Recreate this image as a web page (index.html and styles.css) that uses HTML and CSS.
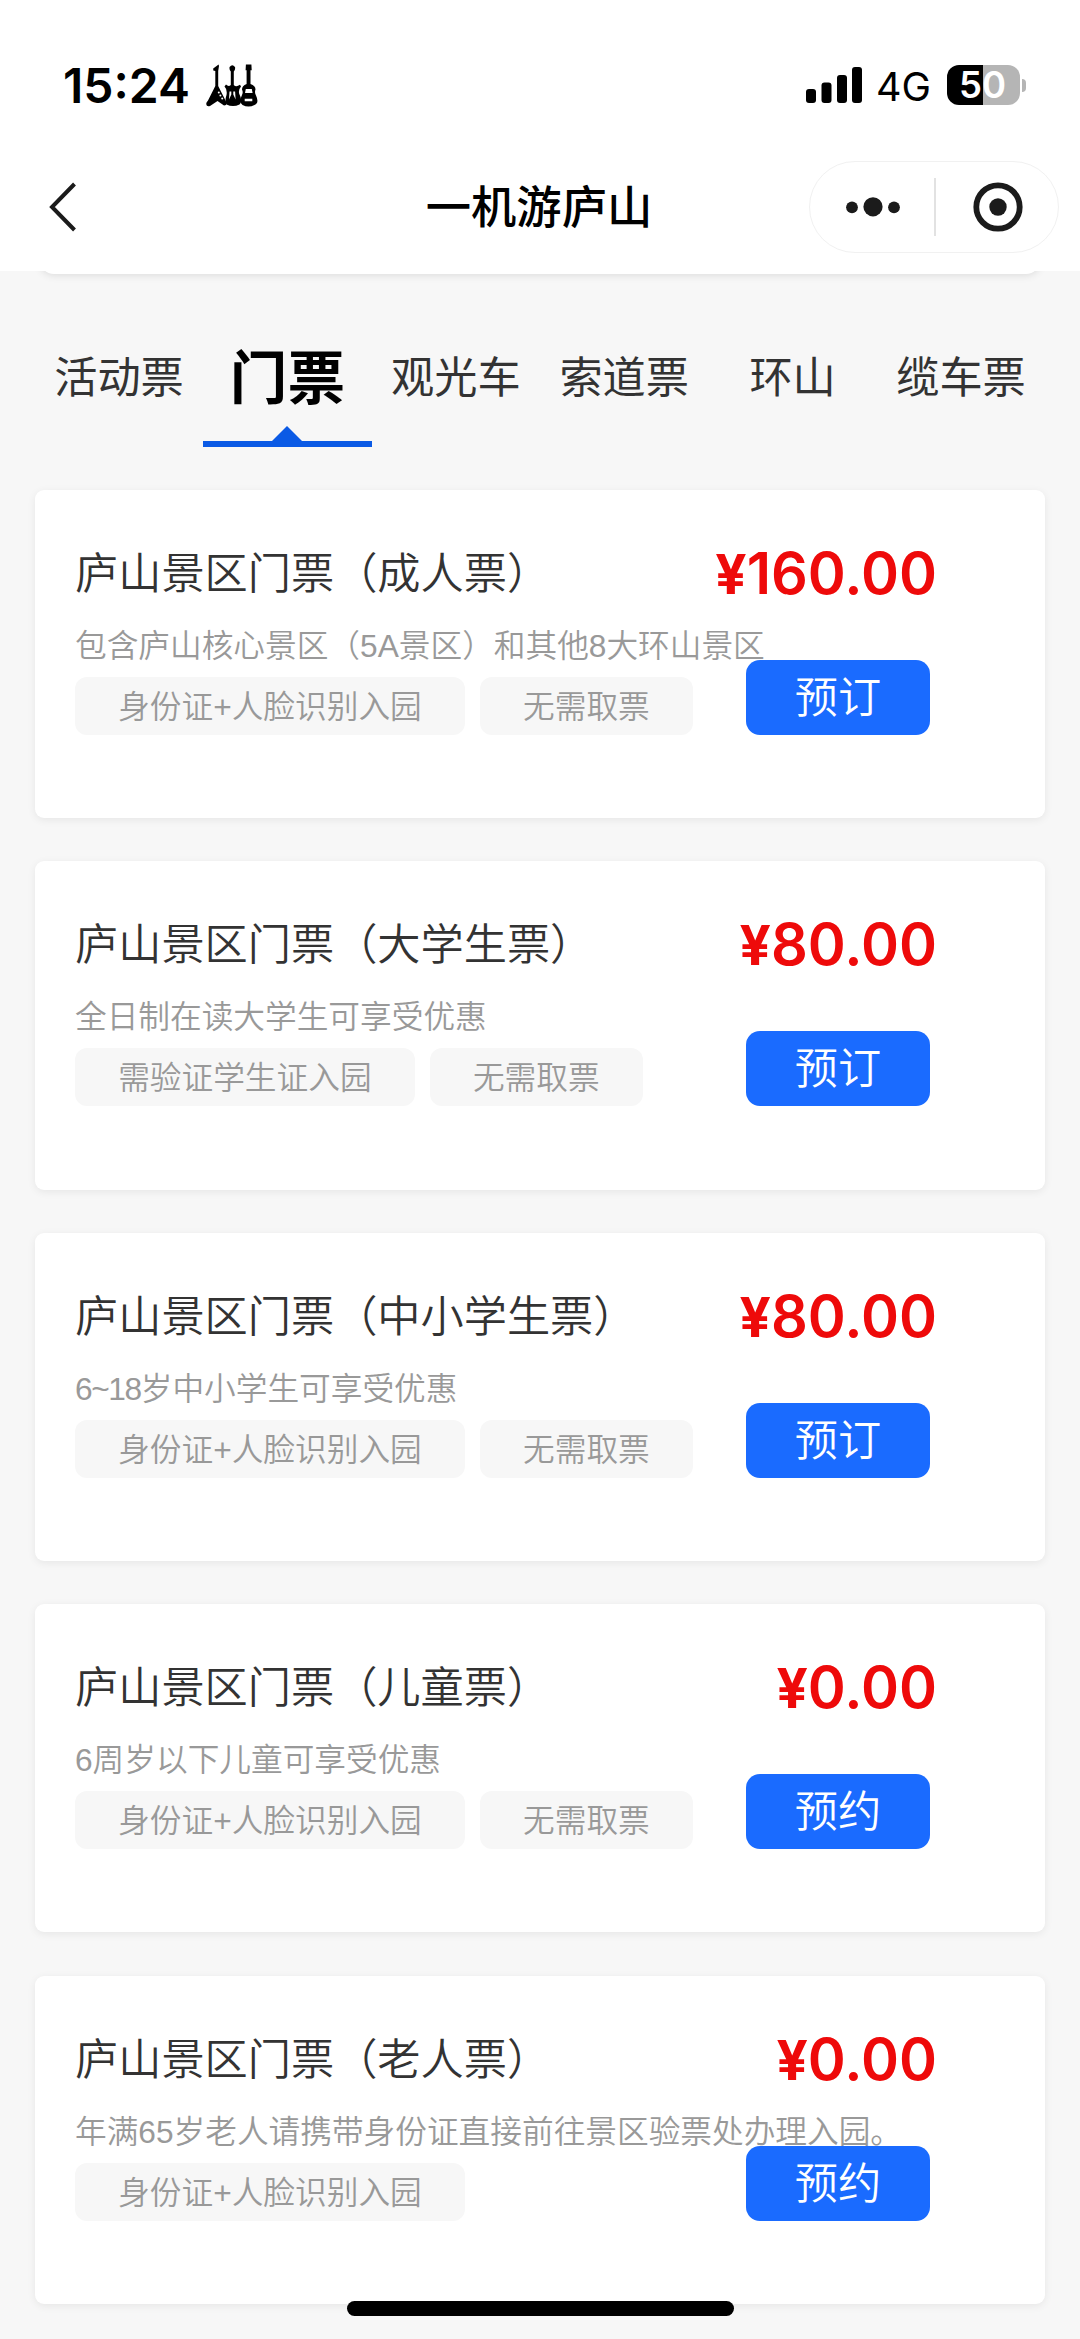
FILE: index.html
```html
<!DOCTYPE html>
<html lang="zh-CN">
<head>
<meta charset="utf-8">
<title>一机游庐山</title>
<link rel="stylesheet" href="styles.css">
</head>
<body>
<header class="header">
  <div class="status">
    <span class="time">15:24</span>
    <svg class="guitars" width="52" height="43" viewBox="0 0 52 43">
      <path d="M9.300 22V7L7.300 6.500 7.200 4.600 12.600 0.600 13 2 12.200 7V22L20.500 38.500Q21 41.500 18 41.500L11.500 37 4 42Q0.500 43 0.200 40Q0 38.500 2 36.500Z"/>
      <path d="M24.800 21V7.500Q23 5.500 23.600 3Q26.300-0.500 29 3Q29.600 5.500 27.800 7.500V21Q30 23.500 34 20.800L35 22.500Q32 26 33.300 30Q37 37 33.500 40.500Q27 43.500 20.500 40.500Q18.500 37 20.500 31Q21.500 25.500 18.500 22.500L20 20.500Q22.500 23 24.800 21Z"/>
      <path d="M40.600 20V6.200H39.600L39.900.5H45.400L45.700 6.200H44.500V20Q49.500 21.500 49.500 25.500Q48.300 28.500 50 31.500Q53.500 39 48.500 41Q42.500 44 36.500 41Q32.500 38 35.800 31.500Q37.500 28.500 36 25.500Q36 21.500 40.600 20Z"/>
      <g fill="#fff"><circle cx="12.800" cy="28.600" r="1"/><circle cx="14.400" cy="31.600" r="1"/><circle cx="16.200" cy="34.600" r="1"/><path d="M23.500 27.500h1.800v3l-2.300 5zM29.100 27.500h-1.800v3l2.300 5zM39.800 25h6l.8 4h-7.600zM38.700 34.700h7.600v2.500h-7.600z"/></g>
    </svg>
    <svg class="signal" width="56" height="36" viewBox="0 0 56 36">
      <rect x="0" y="22" width="10" height="14" rx="3"/><rect x="15.500" y="15.500" width="10" height="20.500" rx="3"/><rect x="31" y="8" width="10" height="28" rx="3"/><rect x="46" y="0" width="10" height="36" rx="3"/>
    </svg>
    <span class="network">4G</span>
    <span class="battery"><b>50</b></span>
    <span class="battery-cap"></span>
  </div>
  <div class="navbar">
    <svg class="back" width="28" height="52" viewBox="0 0 28 52"><path d="M25.500 3 3 26 25.500 49" fill="none" stroke="#1b1b1b" stroke-width="4"/></svg>
    <h1 class="title">一机游庐山</h1>
    <div class="capsule">
      <svg width="54" height="20" viewBox="0 0 54 20"><circle cx="6" cy="10.300" r="5.900"/><circle cx="27" cy="9.800" r="9.600"/><circle cx="48" cy="10.300" r="5.900"/></svg>
      <i class="divider"></i>
      <svg width="50" height="50" viewBox="0 0 50 50"><circle cx="25" cy="25" r="21.700" fill="none" stroke="#1b1b1b" stroke-width="5.800"/><circle cx="25" cy="25" r="8.700"/></svg>
    </div>
  </div>
</header>
<div class="banner-edge"></div>
<nav class="tabs">
  <span class="tab">活动票</span>
  <span class="tab active">门票</span>
  <span class="tab">观光车</span>
  <span class="tab">索道票</span>
  <span class="tab">环山</span>
  <span class="tab">缆车票</span>
</nav>
<main class="list">
  <section class="card">
    <div class="info">
      <h2 class="name">庐山景区门票（成人票）</h2>
      <p class="desc">包含庐山核心景区（5A景区）和其他8大环山景区</p>
      <div class="tags"><span class="tag">身份证+人脸识别入园</span><span class="tag">无需取票</span></div>
    </div>
    <div class="buy"><span class="price"><span class="yen">¥</span>160.00</span><span class="button">预订</span></div>
  </section>
  <section class="card">
    <div class="info">
      <h2 class="name">庐山景区门票（大学生票）</h2>
      <p class="desc">全日制在读大学生可享受优惠</p>
      <div class="tags"><span class="tag">需验证学生证入园</span><span class="tag">无需取票</span></div>
    </div>
    <div class="buy"><span class="price"><span class="yen">¥</span>80.00</span><span class="button">预订</span></div>
  </section>
  <section class="card">
    <div class="info">
      <h2 class="name">庐山景区门票（中小学生票）</h2>
      <p class="desc"><span class="range">6~18</span>岁中小学生可享受优惠</p>
      <div class="tags"><span class="tag">身份证+人脸识别入园</span><span class="tag">无需取票</span></div>
    </div>
    <div class="buy"><span class="price"><span class="yen">¥</span>80.00</span><span class="button">预订</span></div>
  </section>
  <section class="card">
    <div class="info">
      <h2 class="name">庐山景区门票（儿童票）</h2>
      <p class="desc">6周岁以下儿童可享受优惠</p>
      <div class="tags"><span class="tag">身份证+人脸识别入园</span><span class="tag">无需取票</span></div>
    </div>
    <div class="buy"><span class="price"><span class="yen">¥</span>0.00</span><span class="button">预约</span></div>
  </section>
  <section class="card">
    <div class="info">
      <h2 class="name">庐山景区门票（老人票）</h2>
      <p class="desc">年满65岁老人请携带身份证直接前往景区验票处办理入园。</p>
      <div class="tags"><span class="tag">身份证+人脸识别入园</span></div>
    </div>
    <div class="buy"><span class="price"><span class="yen">¥</span>0.00</span><span class="button">预约</span></div>
  </section>
</main>
<div class="home-bar"></div>
</body>
</html>
```
FILE: styles.css
```css
* { box-sizing: border-box; margin: 0; padding: 0; }
body {
  width: 1080px;
  height: 2339px;
  overflow: hidden;
  background: #f7f7f7;
  color: #333;
  font-family: Inter, "Noto Sans CJK SC", sans-serif;
}
svg { display: block; flex: none; fill: #1b1b1b; }

.header { height: 271px; background: #fff; position: relative; z-index: 1; }
.status { display: flex; align-items: flex-start; height: 161px; padding: 64px 54px 0 63px; color: #000; }
.status svg { fill: #000; }
.time { width: 143px; font-size: 48px; line-height: 43px; font-weight: 600; white-space: nowrap; }
.signal { margin: 3px 14px 0 auto; }
.network { width: 71px; font-size: 39.500px; line-height: 47px; font-weight: 400; white-space: nowrap; }
.battery {
  width: 73px;
  height: 40px;
  margin-top: 1px;
  padding-right: 2px;
  border-radius: 12px;
  background: linear-gradient(90deg, #000 50%, #b5b5b5 50%);
  color: #fff;
  text-align: center;
  line-height: 40px;
  font-size: 36.500px;
}
.battery b { font-weight: 600; }
.battery-cap { width: 4px; height: 13px; margin: 15px 0 0 2px; border-radius: 0 4px 4px 0; background: #b5b5b5; }

.navbar { display: grid; grid-template-columns: 250px 1fr 250px; align-items: center; height: 92px; padding: 0 21px 0 49px; }
.title { margin-left: -30px; padding-top: 2px; color: #000; font-size: 45.300px; line-height: 60px; font-weight: 500; text-align: center; }
.capsule { display: flex; align-items: center; height: 92px; padding: 0 35px 0 36px; border: 1.500px solid #f1f1f1; border-radius: 46px; }
.divider { width: 2px; height: 58px; margin: 0 37px 0 auto; background: #e2e2e2; }

.banner-edge { width: 1000px; height: 20px; margin: -17px auto 0; border-radius: 0 0 14px 14px; background: #fff; box-shadow: 0 1px 9px rgba(0, 0, 0, .12); }

.tabs { display: grid; grid-template-columns: repeat(6, 168.400px); justify-content: center; margin-top: 57px; height: 116px; }
.tab { position: relative; height: 116px; line-height: 93px; font-size: 43.200px; text-align: center; white-space: nowrap; }
.tab.active { color: #000; font-size: 57.600px; line-height: 95px; font-weight: 700; border-bottom: 6px solid #0b5ae5; }
.tab.active::after {
  content: "";
  position: absolute;
  left: 50%;
  bottom: 0;
  border: 15px solid transparent;
  border-top: 0;
  border-bottom: 15px solid #0b5ae5;
  transform: translateX(-50%);
}

.list { display: grid; gap: 43.200px; padding: 43px 35px 0; }
.card { display: flex; height: 328.200px; padding: 54px 115px 0 40px; border-radius: 9px; background: #fff; box-shadow: 0 2px 9px rgba(0, 0, 0, .07); }
.info { width: 671px; }
.name { font-size: 43.200px; line-height: 58px; font-weight: 350; white-space: nowrap; }
.desc, .tag { color: #999; font-family: "Liberation Sans", "Noto Sans CJK SC", sans-serif; font-size: 31.680px; font-weight: 350; white-space: nowrap; }
.desc { margin-top: 22px; line-height: 45px; }
.range { letter-spacing: -1.400px; }
.tags { display: flex; gap: 15px; margin-top: 8px; }
.tag { height: 58px; padding: 0 43.200px; border-radius: 12px; background: #f7f7f7; line-height: 60px; }
.buy { position: relative; display: flex; flex-direction: column; align-items: flex-end; width: 184px; }
.price { margin-right: -7px; color: #ee0a0a; font-size: 57.600px; line-height: 58px; font-weight: 600; white-space: nowrap; }
.yen { font-size: 55px; font-weight: 700; }
.button { width: 184px; height: 75px; margin-top: 57px; border-radius: 14px; background: #1a6bff; color: #fff; font-size: 43.200px; line-height: 74px; font-weight: 350; text-align: center; }

.home-bar { position: absolute; left: 347px; top: 2301px; width: 387px; height: 15px; border-radius: 8px; background: #000; }
```
